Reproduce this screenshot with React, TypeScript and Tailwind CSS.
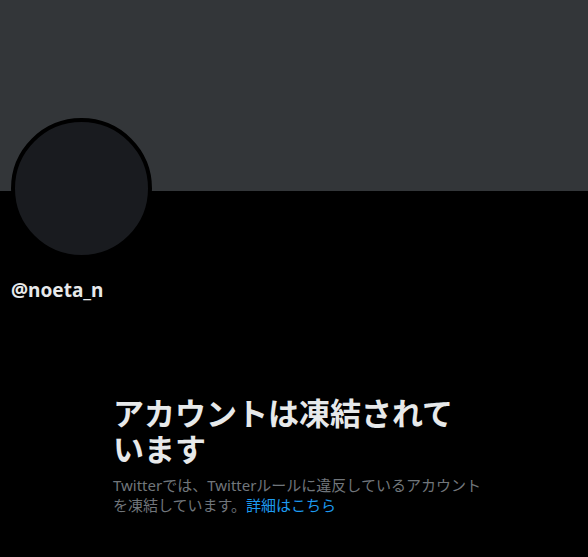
export default function App() {
  return (
    <div
      className="min-h-[557px] w-full bg-black"
      style={{ fontFamily: '"Segoe UI", "Noto Sans", "Noto Sans CJK JP", sans-serif' }}
    >
      <div className="h-[191px] w-full bg-[#333639]" />
      <div className="px-[11px]">
        <div className="-mt-[73px] h-[141px] w-[141px] rounded-full border-4 border-black bg-[#191b1f]" />
        <div className="mt-[20px] text-[19px] leading-[22px] font-bold text-[#e7e9ea]">@noeta_n</div>
      </div>
      <div className="mx-auto mt-[94px] w-[362px]">
        <h1 className="text-[31px] leading-[36px] font-bold text-[#e7e9ea]">
          アカウントは凍結されています
        </h1>
        <p className="mt-[8px] w-[374px] text-[15px] leading-[20px] text-[#71767b]">
          Twitterでは、Twitterルールに違反しているアカウントを凍結しています。
          <span className="text-[#1d9bf0]">詳細はこちら</span>
        </p>
      </div>
    </div>
  );
}
